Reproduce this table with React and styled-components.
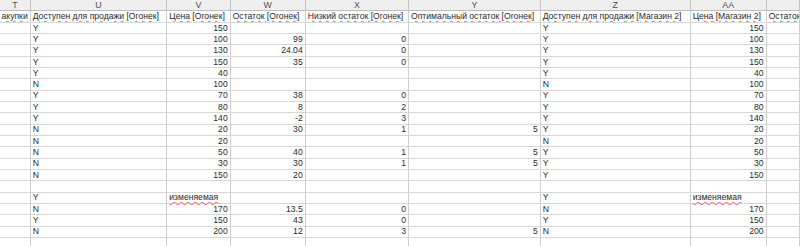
import React from "react";
import styled, { createGlobalStyle } from "styled-components";

const GlobalStyle = createGlobalStyle`
  html, body {
    margin: 0;
    padding: 0;
    background: #ffffff;
    overflow: hidden;
  }
`;

// column widths taken from the sheet (zoomed out view)
const COLS = ["30.7px", "136.6px", "63.4px", "75px", "103.3px", "131.7px", "150px", "76px", "1fr"];
const LETTERS = ["T", "U", "V", "W", "X", "Y", "Z", "AA", ""];

const HEADERS = [
  { text: "Цена закупки", clip: "left" },
  { text: "Доступен для продажи [Огонек]" },
  { text: "Цена [Огонек]" },
  { text: "Остаток [Огонек]" },
  { text: "Низкий остаток [Огонек]" },
  { text: "Оптимальный остаток [Огонек]" },
  { text: "Доступен для продажи [Магазин 2]" },
  { text: "Цена [Магазин 2]" },
  { text: "Остаток [Магазин 2]" },
];

// U, V, W, X, Y, Z, AA
const ROWS = [
  ["Y", 150, "", "", "", "Y", 150],
  ["Y", 100, 99, 0, "", "Y", 100],
  ["Y", 130, 24.04, 0, "", "Y", 130],
  ["Y", 150, 35, 0, "", "Y", 150],
  ["Y", 40, "", "", "", "Y", 40],
  ["N", 100, "", "", "", "N", 100],
  ["Y", 70, 38, 0, "", "Y", 70],
  ["Y", 80, 8, 2, "", "Y", 80],
  ["Y", 140, -2, 3, "", "Y", 140],
  ["N", 20, 30, 1, 5, "Y", 20],
  ["N", 20, "", "", "", "N", 20],
  ["N", 50, 40, 1, 5, "Y", 50],
  ["N", 30, 30, 1, 5, "Y", 30],
  ["N", 150, 20, "", "", "Y", 150],
  ["", "", "", "", "", "", ""],
  ["Y", "изменяемая", "", "", "", "Y", "изменяемая"],
  ["N", 170, 13.5, 0, "", "N", 170],
  ["Y", 150, 43, 0, "", "Y", 150],
  ["N", 200, 12, 3, 5, "N", 200],
  ["", "", "", "", "", "", ""],
];

const Sheet = styled.div`
  display: grid;
  grid-template-columns: ${COLS.join(" ")};
  grid-auto-rows: 11.33px;
  width: 800px;
  height: 246px;
  overflow: hidden;
  font-family: "Liberation Sans", Arial, sans-serif;
  font-size: 8.6px;
  color: #2a2a2a;
`;

const ColLetter = styled.div`
  display: flex;
  align-items: center;
  justify-content: center;
  height: 11px;
  background: #efefef;
  border-right: 1px solid #c4c4c4;
  border-bottom: 1px solid #bdbdbd;
  box-sizing: border-box;
  color: #505050;
  font-size: 8.8px;
`;

const Cell = styled.div`
  display: flex;
  align-items: center;
  justify-content: ${(p) => (p.$align === "right" ? "flex-end" : "flex-start")};
  padding: 0 2px;
  border-right: 1px solid #cfcfcf;
  border-bottom: 1px solid #d8d8d8;
  box-sizing: border-box;
  white-space: nowrap;
  overflow: ${(p) => (p.$overflow ? "visible" : "hidden")};
  position: relative;
  z-index: ${(p) => (p.$overflow ? 1 : 0)};
  line-height: 1;
`;

const Spell = styled.span`
  text-decoration: underline wavy #e86060;
  text-decoration-thickness: 0.5px;
  text-underline-offset: 1px;
`;

const HeadCell = styled(Cell)`
  margin-top: -0.33px;
`;

const isText = (v) => typeof v === "string" && v.length > 1;

export default function App() {
  return (
    <>
      <GlobalStyle />
      <Sheet>
        {LETTERS.map((l, i) => (
          <ColLetter key={"l" + i}>{l}</ColLetter>
        ))}
        {HEADERS.map((h, i) => (
          <HeadCell key={"h" + i} $align={h.clip === "left" ? "right" : "left"}>
            <Spell>{h.clip === "left" ? h.text.slice(6) : h.text}</Spell>
          </HeadCell>
        ))}
        {ROWS.map((row, r) => (
          <React.Fragment key={"r" + r}>
            <Cell />
            {row.map((v, c) => {
              const numeric = typeof v === "number";
              return (
                <Cell
                  key={c}
                  $align={numeric ? "right" : "left"}
                  $overflow={isText(v)}
                >
                  {isText(v) ? <Spell>{v}</Spell> : String(v)}
                </Cell>
              );
            })}
            <Cell />
          </React.Fragment>
        ))}
      </Sheet>
    </>
  );
}
